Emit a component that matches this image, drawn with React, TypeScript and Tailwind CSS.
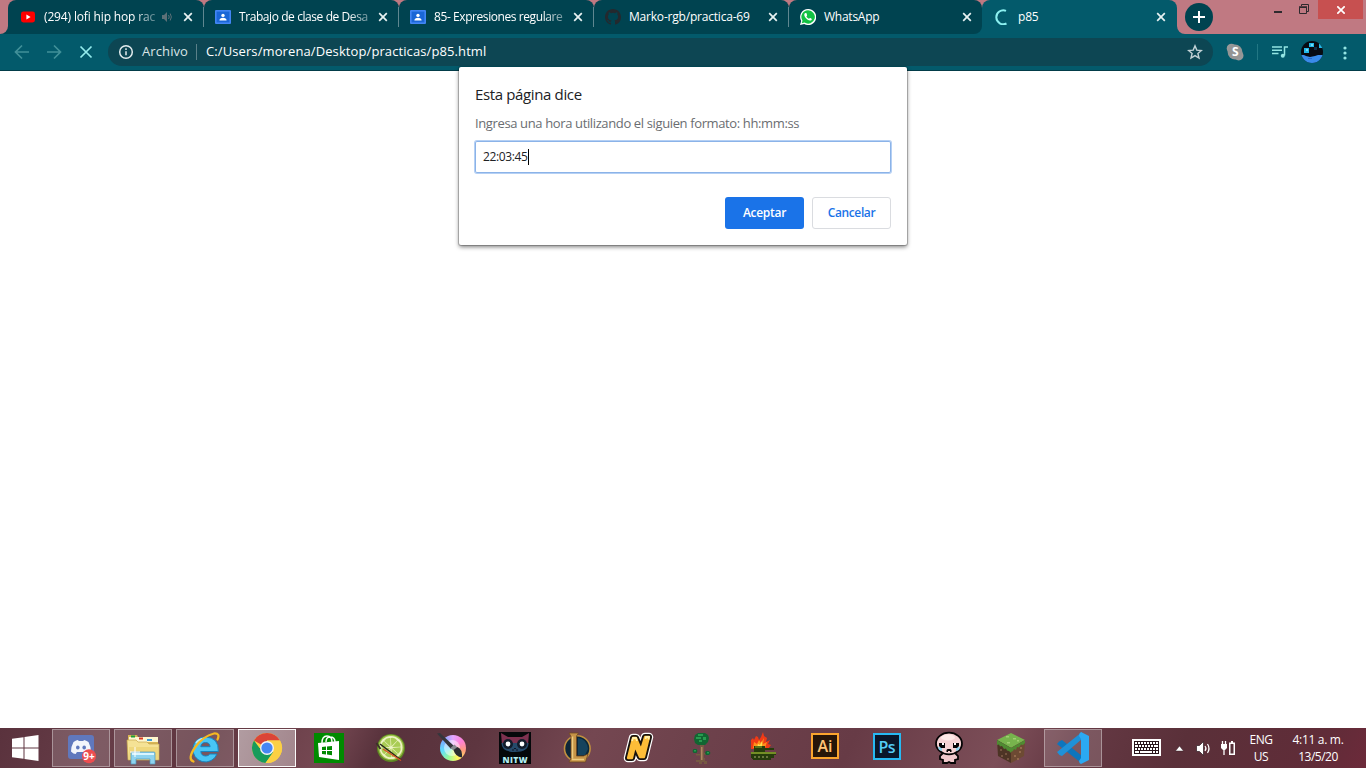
import React from "react";

type P = { children?: React.ReactNode };

const CloseX = ({ className = "" }: { className?: string }) => (
  <svg viewBox="0 0 10 10" className={"h-2.5 w-2.5 shrink-0 " + className} fill="none" stroke="currentColor" strokeWidth="1.7">
    <path d="M1.2 1.2 8.8 8.8M8.8 1.2 1.2 8.8" />
  </svg>
);

const YouTube = () => (
  <svg viewBox="0 0 16 16" className="h-4 w-4 shrink-0">
    <rect x="1" y="2.6" width="14" height="10.8" rx="2.4" fill="#f00" />
    <path d="M6.4 5.6v4.8L10.6 8z" fill="#fff" />
  </svg>
);

const Classroom = () => (
  <svg viewBox="0 0 16 16" className="h-4 w-4 shrink-0">
    <rect x="0" y="1" width="16" height="14" rx="1" fill="#4285f4" />
    <rect x="1.6" y="2.6" width="12.8" height="10.8" fill="#1a66d6" />
    <circle cx="8" cy="6.4" r="1.7" fill="#fff" />
    <path d="M4.4 11.6c0-2 1.6-2.8 3.6-2.8s3.6.8 3.6 2.8z" fill="#fff" />
  </svg>
);

const GitHub = () => (
  <svg viewBox="0 0 16 16" className="h-4 w-4 shrink-0" fill="#24292e">
    <path d="M8 0C3.58 0 0 3.58 0 8c0 3.54 2.29 6.53 5.47 7.59.4.07.55-.17.55-.38 0-.19-.01-.82-.01-1.49-2.01.37-2.53-.49-2.69-.94-.09-.23-.48-.94-.82-1.13-.28-.15-.68-.52-.01-.53.63-.01 1.08.58 1.23.82.72 1.21 1.87.87 2.33.66.07-.52.28-.87.51-1.07-1.78-.2-3.64-.89-3.64-3.95 0-.87.31-1.59.82-2.15-.08-.2-.36-1.02.08-2.12 0 0 .67-.21 2.2.82a7.6 7.6 0 0 1 4 0c1.53-1.04 2.2-.82 2.2-.82.44 1.1.16 1.92.08 2.12.51.56.82 1.27.82 2.15 0 3.07-1.87 3.75-3.65 3.95.29.25.54.73.54 1.48 0 1.07-.01 1.93-.01 2.2 0 .21.15.46.55.38A8.01 8.01 0 0 0 16 8c0-4.42-3.58-8-8-8z" />
  </svg>
);

const WhatsApp = () => (
  <svg viewBox="0 0 16 16" className="h-4 w-4 shrink-0">
    <path d="M8 0a8 8 0 0 0-6.8 12L0 16l4.2-1.1A8 8 0 1 0 8 0z" fill="#fff" />
    <path d="M8 1.3a6.7 6.7 0 0 0-5.5 10.4l-.8 2.6 2.8-.7A6.7 6.7 0 1 0 8 1.3z" fill="#12c143" />
    <path d="M5.5 4.1c-.6.1-1.3.9-1.2 1.9.2 2.4 3.3 5.4 5.6 5.5 1 .1 1.9-.6 1.9-1.6 0-.3-1.6-1.1-1.9-1-.4.1-.7 1-1.1.9-1-.3-2-1.3-2.4-2.2-.1-.4.7-.8.7-1.2 0-.3-.6-2.200-.9-2.300z" fill="#fff" />
  </svg>
);

const Spinner = () => (
  <svg viewBox="0 0 16 16" className="h-4 w-4 shrink-0" fill="none" stroke="#8cf0f0" strokeWidth="2">
    <path d="M12 1.800A7 7 0 1 0 12.500 14.500" />
  </svg>
);

const Speaker = () => (
  <svg viewBox="0 0 12 12" className="mr-2.5 h-3 w-3 shrink-0" fill="#5c7077">
    <path d="M1 4h2l3-3v10L3 8H1z" />
    <path d="M7.500 4q1.500 2 0 4M9.200 2.500q2.300 3.500 0 7" fill="none" stroke="#5c7077" />
  </svg>
);

type TabProps = { icon: React.ReactNode; title: string; track: string; width: string; fade?: boolean; audio?: boolean; sep?: boolean; shape?: string };

const Tab = ({ icon, title, track, width, fade, audio, sep, shape = "pl-[11px]" }: TabProps) => (
  <div className={"flex h-full shrink-0 items-center " + width}>
    <div className={"flex h-full min-w-0 flex-1 items-center rounded-t-lg bg-[#004350] " + shape}>
      {icon}
      <div className={"ml-2 min-w-0 flex-1 whitespace-nowrap text-xs text-white " + track + (fade ? " [mask-image:linear-gradient(to_right,black_80%,#0004)]" : "")}>{title}</div>
      <span className="w-1 shrink-0" />
      {audio && <Speaker />}
      <CloseX className="mr-2.5 text-[#e8f2f2]" />
      {sep && <span className="h-5 w-px shrink-0 bg-[#5f8790]" />}
    </div>
  </div>
);

const Task = ({ children, state = "" }: P & { state?: string }) => (
  <div className={"flex h-[38px] w-[58px] shrink-0 items-center justify-center " + state}>
    <svg viewBox="0 0 40 38" className="h-[38px] w-10">{children}</svg>
  </div>
);
const running = "bg-[#ffffff28] shadow-[inset_0_0_0_1px_#ffffff5c]";
const active = "bg-[linear-gradient(110deg,#ffffff80,#ffffff58)] shadow-[inset_0_0_0_1px_#fffffff0]";

const limeSlices = [0, 45, 90, 135, 180, 225, 270, 315];

export default function App() {
  return (
    <div className="relative flex h-[768px] w-[1366px] flex-col overflow-hidden bg-white font-['Open_Sans','Noto_Sans',sans-serif]">
      <header className="flex h-[34px] shrink-0 bg-[#c07982]">
        <div className="w-2 shrink-0 bg-[#004350]"><div className="h-full rounded-br-lg bg-[#c07982]" /></div>
        <Tab width="w-[196px]" icon={<YouTube />} title="(294) lofi hip hop rac" track="tracking-[-0.15px]" fade audio sep shape="pl-3" />
        <Tab width="w-[195px]" icon={<Classroom />} title="Trabajo de clase de Desa" track="tracking-[-0.42px]" fade sep />
        <Tab width="w-[195px]" icon={<Classroom />} title="85- Expresiones regulare" track="tracking-[-0.42px]" fade sep />
        <Tab width="w-[195px]" icon={<GitHub />} title="Marko-rgb/practica-69" track="tracking-[-0.2px]" sep />
        <Tab width="w-[193px] bg-[linear-gradient(#c07982_50%,#035a6b_50%)]" icon={<WhatsApp />} title="WhatsApp" track="tracking-[-0.25px]" shape="rounded-br-lg pl-[11px]" />
        <div className="flex w-[195px] shrink-0 items-center rounded-t-lg bg-[#035a6b] pl-3">
          <Spinner />
          <div className="ml-2 flex-1 text-xs tracking-[-0.2px] text-white">p85</div>
          <CloseX className="mr-[11px] text-[#e8f2f2]" />
        </div>
        <div className="w-2 shrink-0 bg-[#035a6b]"><div className="h-full rounded-bl-lg bg-[#c07982]" /></div>
        <div className="mt-[3px] flex h-7 w-7 shrink-0 items-center justify-center rounded-full bg-[#004350]">
          <svg viewBox="0 0 12 12" className="h-3 w-3" stroke="#fff" strokeWidth="2"><path d="M6 0v12M0 6h12" /></svg>
        </div>
        <div className="ml-auto mr-[3px] flex">
          <svg viewBox="0 0 36 20" className="mr-2 h-5 w-9" fill="none" stroke="#2e2a2e">
            <path d="M0 12h8" strokeWidth="2" />
            <path d="M25.500 7.500h7v6h-7zM27.500 6V4.500h7v7H33" />
            <path d="M25 7h8" strokeWidth="1.500" />
          </svg>
          <div className="flex h-[19px] w-[45px] items-center justify-center bg-[#c75050]">
            <svg viewBox="0 0 8 8" className="h-2 w-2" stroke="#fff" strokeWidth="1.700"><path d="M.3.3 7.700 7.700M7.700.3.300 7.700" /></svg>
          </div>
        </div>
      </header>

      <div className="flex h-[37px] shrink-0 items-start border-b border-[#023c49] bg-[#035a6b] pt-1">
        <svg viewBox="0 0 80 28" className="ml-[14px] h-7 w-20 shrink-0" fill="none" strokeWidth="1.700">
          <path d="M15 14H2M8 7.500 1.500 14 8 20.500M33 14h13M40 7.500 46.500 14 40 20.500" stroke="#419099" />
          <path d="M66.500 8.500l11 11M77.500 8.500l-11 11" stroke="#94eced" />
        </svg>
        <div className="ml-[14px] flex h-7 w-[1105px] shrink-0 items-center rounded-full bg-[#0d4653] pl-2.5 text-white">
          <svg viewBox="0 0 16 16" className="h-4 w-4 shrink-0" fill="none" stroke="#e3ecee" strokeWidth="1.500">
            <circle cx="8" cy="8" r="6.300" /><path d="M8 7.200v4M8 4.300v1.600" />
          </svg>
          <span className="ml-2 w-12 whitespace-nowrap text-[13px] tracking-[0.1px] text-[#d9e4e6]">Archivo</span>
          <span className="ml-[6px] h-4 w-px bg-[#5b8089]" />
          <span className="ml-[9px] whitespace-nowrap text-[13px] tracking-[0.1px]">C:/Users/morena/Desktop/practicas/p85.html</span>
          <svg viewBox="0 0 16 16" className="ml-auto mr-2.5 h-4 w-4" fill="none" stroke="#c3d2d6" strokeWidth="1.400">
            <path d="m8 1.900 1.800 4.200 4.600.4-3.500 3 1.100 4.500-4-2.400L4 14l1.100-4.500-3.500-3 4.600-.4z" />
          </svg>
        </div>
        <svg viewBox="0 0 18 18" className="ml-[13px] mt-[5px] h-[18px] w-[18px] shrink-0">
          <circle cx="5.500" cy="5.500" r="4.800" fill="#999" /><circle cx="12.700" cy="12.700" r="4.800" fill="#999" /><circle cx="9" cy="9" r="7.400" fill="#959595" />
          <text x="9.200" y="13.300" textAnchor="middle" fontSize="12" fontWeight="700" fill="#fff">S</text>
        </svg>
        <span className="ml-[13px] mt-1.5 h-4 w-px shrink-0 bg-[#227784]" />
        <svg viewBox="0 0 16 14" className="ml-[14px] mt-[7px] h-[14px] w-4 shrink-0" fill="none" stroke="#94e5e3" strokeWidth="1.500">
          <path d="M0 2h10M0 5.200h10M0 8.400h6.500M12.500 10.500V2H16" /><circle cx="10.800" cy="10.700" r="2" fill="#94e5e3" stroke="none" />
        </svg>
        <svg viewBox="0 0 22 22" className="ml-[13px] mt-[3px] h-[22px] w-[22px] shrink-0">
          <clipPath id="avatar"><circle cx="11" cy="11" r="11" /></clipPath>
          <g clipPath="url(#avatar)">
            <path fill="#070b12" d="M0 0h22v22H0z" /><path fill="#22b8e8" d="M8 2h5v4H8zM3 7h5v5H3zM18 2h4v5h-4z" />
            <path fill="#75dcf5" d="M10 3h2v2h-2zM5 8h2v2H5z" /><path fill="#10304a" d="M13 6h3v3h-3z" />
            <path fill="#398bea" d="M0 14h3l2 1 4 1 5-1 3-1h5v8H0z" /><path fill="#2868cc" d="M7 17h4v1H7z" />
          </g>
        </svg>
        <svg viewBox="0 0 4 14" className="ml-5 mt-[8px] h-[14px] w-1 shrink-0" fill="#94e5e3"><circle cx="2" cy="2" r="1.600" /><circle cx="2" cy="7" r="1.600" /><circle cx="2" cy="12" r="1.600" /></svg>
      </div>

      <main className="flex-1 bg-white" />

      <section className="absolute left-[459px] top-[67px] flex h-[178px] w-[448px] flex-col rounded-[2px] bg-white px-4 shadow-[0_0_0_1px_#00000030,0_2px_4px_#00000080]">
        <h1 className="mt-4 h-[22px] whitespace-nowrap text-[15px] leading-[22px] tracking-[-0.36px] text-[#202124]">Esta página dice</h1>
        <p className="mt-2 h-5 whitespace-nowrap text-[13px] leading-5 tracking-[-0.37px] text-[#6a6d71]">Ingresa una hora utilizando el siguien formato: hh:mm:ss</p>
        <div className="mt-2 flex h-8 items-center rounded-[2px] bg-white pl-2 text-xs text-[#202124] shadow-[inset_0_0_0_1px_#8bb3e8,0_0_0_1px_#b5d0f4]">
          <span className="tracking-[-0.36px]">22:03:45</span><span className="h-4 w-px bg-black" />
        </div>
        <div className="mt-6 flex justify-end gap-2 text-xs font-semibold">
          <button className="h-8 w-[79px] rounded-[3px] bg-[#1a73e8] tracking-[-0.3px] text-white">Aceptar</button>
          <button className="h-8 w-[79px] rounded-[3px] border border-[#dadce0] tracking-[-0.4px] text-[#1a73e8]">Cancelar</button>
        </div>
      </section>

      <footer className="flex h-10 shrink-0 items-center bg-[linear-gradient(115deg,#5a323d_0%,#673d48_8%,#5e353f_15%,#754852_24%,#58323c_28%,#5e3640_35%,#744751_43%,#6e424c_50%,#673b46_62%,#7c4e58_73%,#653944_78%,#5a3039_86%,#602c38_96%,#6c2a3a_100%)] text-white">
        <svg viewBox="0 0 27 26" className="ml-3 mr-[13px] h-[26px] w-[27px] shrink-0" fill="#fff"><path d="M0 3.800 11.500 2.200v10.300H0zM12.500 2 26.500 0v12.500h-14zM0 13.500h11.500v10.300L0 22.200zM12.500 13.500h14V26l-14-2z" /></svg>
        <div className="flex gap-1">
          <Task state={running}>
            <rect x="7" y="6" width="26" height="24" rx="3" fill="#6078bd" />
            <path d="M12.500 13q3-2 4.500-2l.7 1h4.600l.7-1q2 .3 4.500 2 2.500 5 2.500 9.500-2.500 2.500-4.700 2.500l-1.200-2h-8.200l-1.200 2q-2.200 0-4.700-2.500 0-5 2.500-9.500z" fill="#f3f5fb" /><ellipse cx="16.800" cy="18.500" rx="1.800" ry="2.100" fill="#6078bd" /><ellipse cx="23.200" cy="18.500" rx="1.800" ry="2.100" fill="#6078bd" />
            <circle cx="28" cy="27.300" r="7" fill="#ed4d50" /><text x="28" y="31" textAnchor="middle" fontSize="10" fontWeight="700" fill="#fff">9+</text>
          </Task>
          <Task state={running}>
            <path d="M5 9V6h9l1 2h11l1 2h8v19H5z" fill="#d7b656" /><path d="M6 8h29v5H6z" fill="#fff7cf" /><path d="M8 6.500h4v2H8z" fill="#1d9d35" /><path d="M16 8.500h4v2h-4z" fill="#d93a24" /><path d="M24 10h5v2h-5z" fill="#3c9cd9" />
            <path d="M4 11h9l2 2h9l2 2h10v16H5z" fill="#f5e295" stroke="#c7a64a" strokeWidth=".7" /><path d="M6 18h29v12H6z" fill="#efd77c" />
            <path d="M8 35V24q0-1 1-1h22q1 0 1 1v11h-5v-5H13v5z" fill="#8ed3ef" stroke="#5298bd" strokeWidth=".7" /><path d="M9 25h22" stroke="#d9f5ff" strokeWidth="2" /><path d="M12 18v10M7 23h10" stroke="#fff" />
          </Task>
          <Task state={running}>
            <path fillRule="evenodd" d="M20.500 8a12.500 12.500 0 1 0 11.500 17h-7.200q-1.300 2-4 2-4.500 0-5-4.500h17.500Q34 8.500 20.500 8zm0 5.500q4.200 0 4.600 4.200h-9.300q.5-4.200 4.700-4.200z" fill="#48c5f4" stroke="#1683bf" strokeWidth="1" />
            <path d="M11 14q3-4 8-4.500" fill="none" stroke="#b3edff" strokeWidth="2" />
            <path d="M8.500 32.500Q2 30 10 18.500T29 4.500q6.500-.5 3.500 6" fill="none" stroke="#f5b821" strokeWidth="2.200" strokeLinecap="round" />
          </Task>
          <Task state={active}>
            <circle cx="20" cy="19" r="15" fill="#fbd044" /><path d="M20 19 7 11.500A15 15 0 0 1 33 11.500H20z" fill="#db4437" /><path d="M20 19h-7.500L7 11.500A15 15 0 0 0 18.500 34L26.500 23z" fill="#179b5b" /><path d="M20 19 26.500 22.800 18.500 34A15 15 0 0 0 33 11.500H20z" fill="#fbd044" />
            <circle cx="20" cy="19" r="7" fill="#f4f4f4" /><circle cx="20" cy="19" r="5.600" fill="#4687f4" />
          </Task>
          <Task>
            <path fill="#008a00" d="M5 4h30v30H5z" /><path d="m9 14 21-2v19L10 28z" fill="#fff" /><path d="M13 14q0-7 5-7t5 6M17 13q0-5 4-5 5 0 5 5" fill="none" stroke="#fff" strokeWidth="1.400" /><path d="m13 18 4-.4V21h-4zm5-.5 5-.5v4h-5zM13 22h4v3.500l-4-.5zm5 0h5v4.200l-5-.6z" fill="#008a00" />
          </Task>
          <Task>
            <circle cx="20" cy="19" r="14" fill="#5e8722" /><circle cx="20" cy="18.500" r="12.800" fill="#9fc24b" /><circle cx="20" cy="18.500" r="11.500" fill="#edf3c4" />
            {limeSlices.map((a) => <path key={a} d="M20 17.300 16.600 9.700q3.400-2.300 6.800 0z" fill="#a9cc55" transform={`rotate(${a + 20} 20 18.500)`} />)}
            <path d="M9 15 30 31" stroke="#252718" strokeWidth="1.500" /><path d="m12 20 18 11.500" stroke="#dc5428" strokeWidth="1.400" /><path d="m5.500 14 4 6" stroke="#3a3427" strokeWidth="2" />
          </Task>
          <Task>
            <foreignObject x="7" y="6" width="26" height="26"><div className="h-[26px] w-[26px] rounded-full bg-[conic-gradient(#e4a6ff,#ff80d7,#ff9c7c,#fff35f,#95f99c,#5edcff,#7da9ff,#e4a6ff)]" /></foreignObject><circle cx="19" cy="19" r="8" fill="#fff" opacity=".5" />
            <path d="m4 4.500 3-.5 14 13-3 3z" fill="#34363c" /><path d="m17.500 19 4-3.500 3 3-4 3z" fill="#858a91" /><path d="m20.500 21 4-3q5 2 4.500 10.500-6.500-.5-8.500-7.500z" fill="#292b31" />
          </Task>
          <Task>
            <path fill="#05080a" d="M4 3h32v32H4z" /><path d="m6 4 7 4h14l7-4-1 12H7z" fill="#7d314f" /><path d="M6.500 14h27q0 9-13.500 9T6.500 14z" fill="#264a6b" />
            <circle cx="13" cy="15" r="5" fill="#131c2b" /><circle cx="27" cy="15" r="5" fill="#131c2b" /><circle cx="13" cy="15" r="2.400" fill="#fff" /><circle cx="27" cy="15" r="2.400" fill="#fff" /><path d="M17 21h2m2 0h2m-4-1.500h2" stroke="#101524" />
            <text x="20" y="33.500" textAnchor="middle" fontSize="8.500" fontWeight="800" fill="#b3eef3" textLength="25">NITW</text>
          </Task>
          <Task>
            <circle cx="20.300" cy="19.500" r="12.800" fill="#0c2739" stroke="#c09040" strokeWidth="1.600" /><path d="M21 9q9 1 10 11l-3 6h-7z" fill="#16435d" />
            <path d="M12 4h9.500l-2 3v20h7l4.500-2-2.500 8H12l2-3.500V7.500z" fill="#c69447" stroke="#6e4722" strokeWidth=".8" /><path d="M15.500 7.500v22M15 30.500h12" fill="none" stroke="#edcc80" strokeWidth="1.500" />
          </Task>
          <Task>
            <path d="m9 29 5-20h3l5 12 4-13h4l-5 20h-4l-5-11-3 12z" fill="#fff" stroke="#fff" strokeWidth="8.500" strokeLinejoin="round" />
            <path d="m9 29 5-20h3l5 12 4-13h4l-5 20h-4l-5-11-3 12z" fill="#18120d" stroke="#18120d" strokeWidth="6" strokeLinejoin="round" />
            <path d="m9 29 5-20h3l5 12 4-13h4l-5 20h-4l-5-11-3 12z" fill="#fdbd38" stroke="#fdbd38" strokeWidth="2.300" strokeLinejoin="round" />
            <path d="m13 12 1-3h3l1 3M26.500 10l.5-2h3l-.5 2.500" fill="none" stroke="#fff0a8" strokeWidth="1.800" />
          </Task>
          <Task>
            <path fill="#765943" d="M19 15h4v14h1v3h2v3h-3v-2h-2v2h-3v-2h-3v-2h4zM15 25h4v1.500h-4zM22 24h4v1.500h-4z" /><path fill="#b18663" d="M20 18h1.500v13H20z" />
            <path fill="#116632" d="M17 4h7l3 2 1 3-1 4-3 3h-7l-3-2-1-4 1-4zM12.500 20h3l1 2-1 2h-3l-1-2zM25 22h3l1.500 2-1.500 2h-3l-1-2z" />
            <path fill="#279c4f" d="M17 5h5v2h-5zM15 8h5v2h-5zM22 8h3v3h-3zM18 11h3v2h-3zM13 21h2v1.500h-2zM26 23h2v1.500h-2z" />
          </Task>
          <Task>
            <path fill="#ef3a16" d="M8 20v-9l2-2 1 2 2-4 2 1 1 3 2-3 2-5 1 4 3 2-1 4 4-2-2 4 3 1-3 4z" /><path fill="#ff911a" d="m10 19 1-6 3 2 2-4 2 3 3-5-1 6 4-2-2 6z" /><path fill="#ffe34f" d="m14 19 1-4 2 1 2-4v7z" />
            <g shapeRendering="crispEdges"><path fill="#263c0c" d="M11 17h11v2h9v2h-9v2h11v3h-2v3h-3v2H11l-3-2v-6h3z" /><path fill="#59741b" d="M12 17h7v2h-7z" /><path fill="#748e25" d="M8 23h25v2H8z" /><path fill="#68763d" d="M11 27h2v2h-2zM15 27h2v2h-2zM19 27h2v2h-2zM23 27h2v2h-2z" /></g>
          </Task>
          <Task><path d="M7 5h26v24H7z" fill="#271609" stroke="#fba52e" strokeWidth="2" /><text x="20" y="23" textAnchor="middle" fontSize="16" fontWeight="600" fill="#ffc477" textLength="15">Ai</text></Task>
          <Task><path d="M7 5h26v25H7z" fill="#0a172a" stroke="#27b9f2" strokeWidth="2" /><text x="20" y="23.500" textAnchor="middle" fontSize="16" fontWeight="600" fill="#55cdf6" textLength="17">Ps</text></Task>
          <Task>
            <path d="M14 24h12l3 3v3l-3 1v3h-4l-2-1-2 1h-4v-3l-3-1v-3z" fill="#f0c8cc" stroke="#050405" strokeWidth="1.800" />
            <ellipse cx="20" cy="14.500" rx="13" ry="10.800" fill="#f5d2d4" stroke="#050405" strokeWidth="1.800" /><ellipse cx="19" cy="8.500" rx="7" ry="3" fill="#fdeae8" />
            <path fill="#91d4ef" d="M9 18h4v4l-3-1zM31 18h-4v4l3-1z" /><path fill="#050405" d="M10 14h6v5h-4l-2-2zM24 14h6v3l-2 2h-4zM17.500 23v-2l1-1h3l1 1v2h-1.500v-1h-2v1z" /><path fill="#fff" d="M13 14h2v2h-2zM25 14h2v2h-2z" />
          </Task>
          <Task>
            <path d="m20 4 14 7-14 8-14-8z" fill="#77b44d" /><path d="m6 11 14 8v15L7 27z" fill="#4d3425" /><path d="m34 11-14 8v15l13-7z" fill="#6d4a33" /><path d="m6 11 14 8v5l-2-2-2-.5-1-2-2 .5-2-3-2 .5-1-2-2 .5zM34 11l-14 8v4l2-1 1-2 2 1 1-3 2 .5 2-3 2 .5 2-2z" fill="#4f8b32" />
            <path d="M15 7h3v1.500h-3zM22 9h3v1.500h-3zM16 13h3v1.500h-3zM26 11h2v1.500h-2z" fill="#9fce71" /><path d="M9 20h2v2H9zM14 24h2v2h-2zM10 26h2v2h-2zM16 29h2v2h-2z" fill="#745440" /><path d="M23 26h2v2h-2zM28 22h2v2h-2zM26 29h2v2h-2zM29 18h2v2h-2z" fill="#92694c" />
          </Task>
          <Task state={running}>
            <path d="M4 15q2-3 5-4l20 16v7l-2-1z" fill="#0d75bd" /><path d="M4 23q1.500 3 5 4l20-17V3z" fill="#1f91d8" /><path d="m28 3 8 4v24l-8 4q-2-1-2-3l2-3V10l-2-3q0-3 2-4z" fill="#2ba9f2" />
          </Task>
        </div>
        <svg viewBox="0 0 106 24" className="ml-[30px] h-6 w-[106px] shrink-0" fill="#fff">
          <path d="M0 3h29v17H0z" /><path d="M2 5h25v13H2z" fill="#29151b" /><path d="M3 6h2v2H3zm3 0h2v2H6zm3 0h2v2H9zm3 0h2v2h-2zm3 0h2v2h-2zm3 0h2v2h-2zm3 0h2v2h-2zm3 0h2v2h-2zM3 9h3v2H3zm4 0h2v2H7zm3 0h2v2h-2zm3 0h2v2h-2zm3 0h2v2h-2zm3 0h2v2h-2zm3 0h4v2h-4zM3 12h2v2H3zm3 0h2v2H6zm3 0h2v2H9zm3 0h2v2h-2zm3 0h2v2h-2zm3 0h2v2h-2zm3 0h2v2h-2zm3 0h2v2h-2zM3 15h4v2H3zm5 0h12v2H8zm13 0h2v2h-2zm3 0h2v2h-2z" />
          <path d="m43.500 15 4-5 4 5z" stroke="#2b1820" strokeWidth=".4" />
          <path d="M64.500 9.500h3l4-4v14l-4-4h-3z" stroke="#2b1820" strokeWidth=".7" /><path d="M73 10q2 2.500 0 5M75.500 8q3 4.500 0 9" fill="none" stroke="#fff" strokeWidth="1.200" />
          <path d="M90.500 5v4M93.500 5v4M92 13v6" stroke="#fff" strokeWidth="1.300" /><path d="M89 8h6v4l-2 2h-2l-2-2zM97 6.500h2V5h2v1.500h2V19h-6z" /><path d="M98.500 8h3v9.500h-3z" fill="#573039" />
        </svg>
        <div className="ml-[5px] w-9 pt-px text-center text-xs leading-4 tracking-[-0.5px]"><div>ENG</div><div className="mt-px">US</div></div>
        <div className="ml-[9px] w-[60px] whitespace-nowrap pt-px text-center text-xs leading-4 tracking-[-0.3px]"><div>4:11 a. m.</div><div className="mt-px tracking-[-0.5px]">13/5/20</div></div>
      </footer>
    </div>
  );
}
